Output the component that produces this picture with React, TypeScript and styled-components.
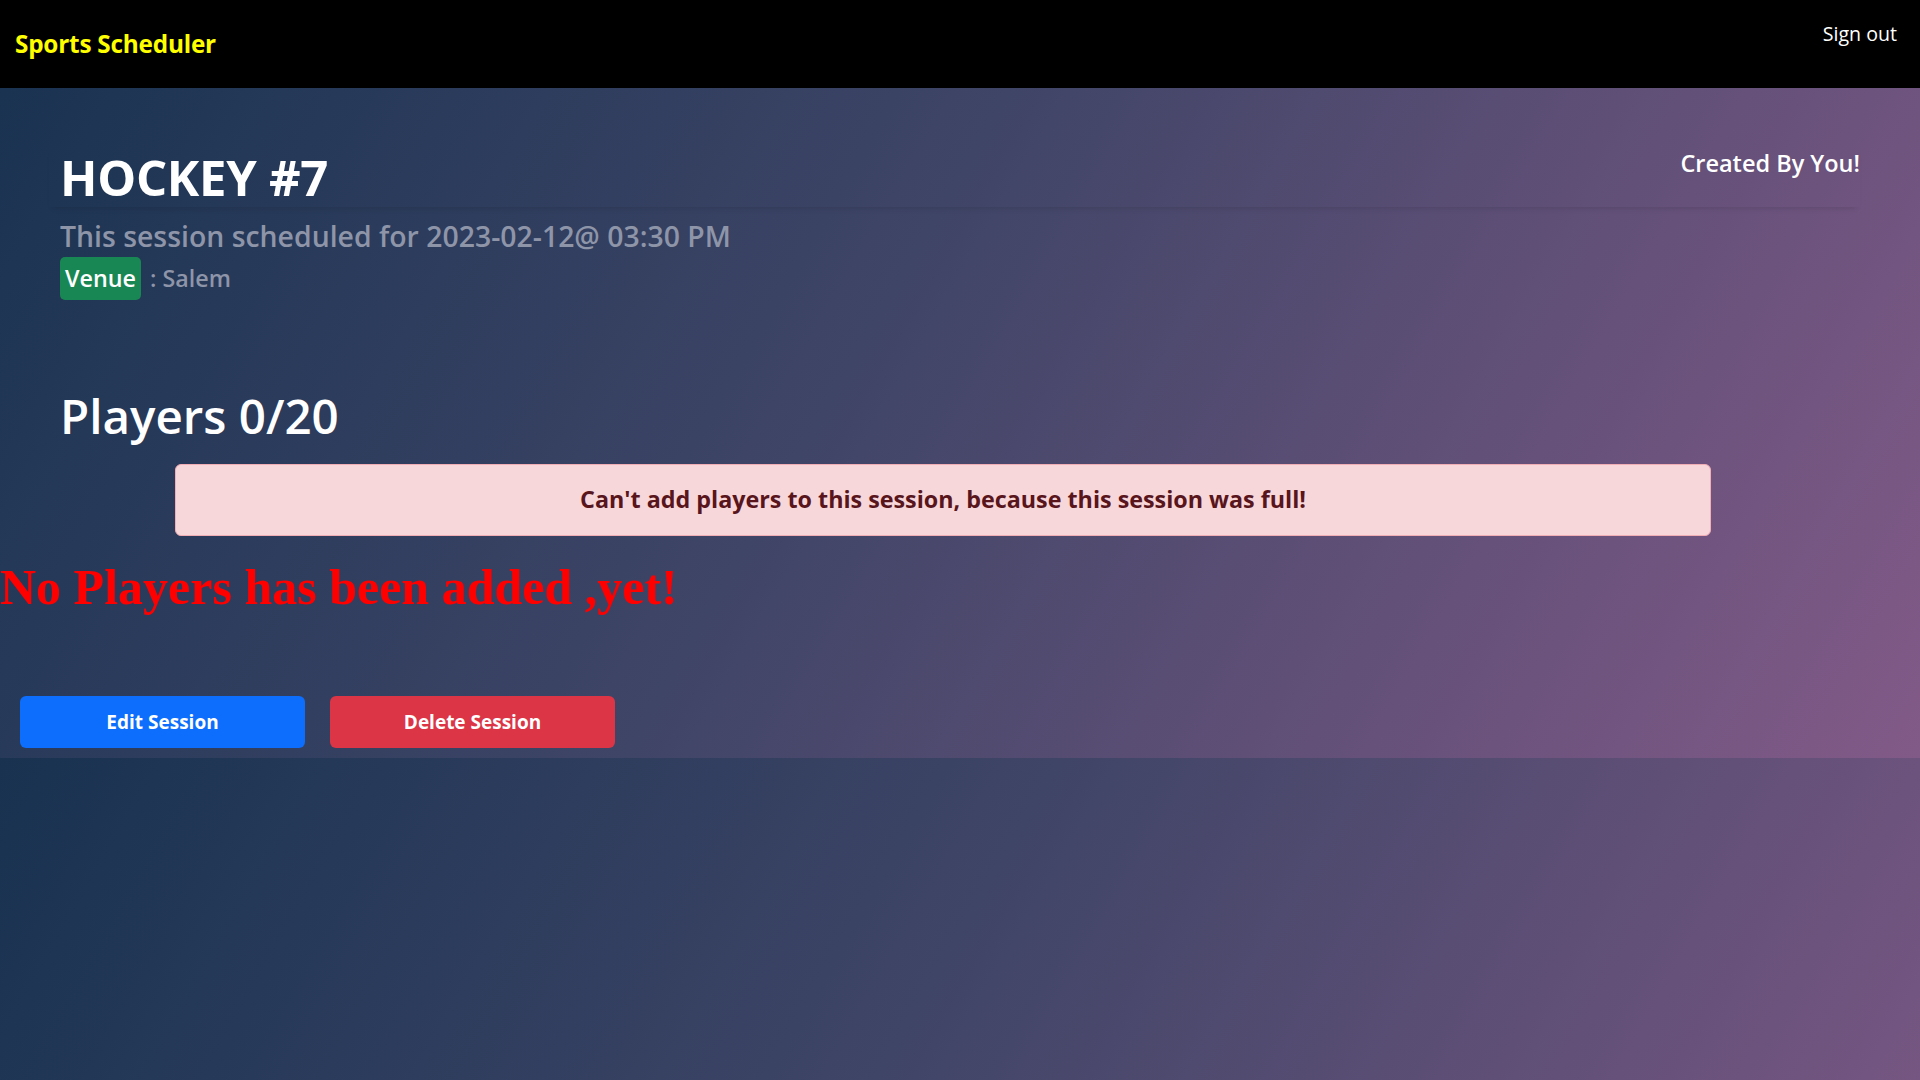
import React from "react";
import styled, { createGlobalStyle } from "styled-components";

const GlobalStyle = createGlobalStyle`
  html, body {
    margin: 0;
    padding: 0;
  }
  body {
    background: linear-gradient(120deg, #183250 0%, #3f4567 45%, #825a88 100%);
    font-family: "Open Sans", "Noto Sans", Arial, sans-serif;
    color: #fff;
  }
`;

const NavBar = styled.nav`
  display: flex;
  justify-content: space-between;
  align-items: flex-start;
  height: 88px;
  background: #000;
  padding: 0 23px 0 15px;
  box-sizing: border-box;
`;

const Brand = styled.a`
  align-self: center;
  color: #ffff00;
  font-weight: 700;
  font-size: 24.3px;
  line-height: 1.4;
  text-decoration: none;
  letter-spacing: -0.2px;
`;

const NavLink = styled.a`
  margin-top: 20px;
  color: #fff;
  font-size: 19.6px;
  line-height: 28px;
  text-decoration: none;
`;

const Section = styled.main`
  display: flex;
  flex-direction: column;
  padding: 57px 0 10px;
`;

const HeaderCard = styled.div`
  display: flex;
  justify-content: space-between;
  align-items: flex-start;
  margin: 0 60px 0 49px;
  padding: 0 0 2px 11px;
  box-shadow: 0 5px 6px -4px rgba(0, 0, 0, 0.12);
`;

const Title = styled.h1`
  margin: 0;
  padding-top: 4px;
  font-size: 49px;
  font-weight: 700;
  line-height: 56px;
  color: #fff;
  letter-spacing: -0.3px;
`;

const Owner = styled.span`
  margin-top: 4px;
  font-size: 23.5px;
  font-weight: 600;
  line-height: 28px;
  color: #fff;
`;

const Subtitle = styled.h3`
  margin: 13px 0 0 60px;
  font-size: 28.4px;
  font-weight: 600;
  line-height: 32px;
  color: #8e95a9;
`;

const VenueRow = styled.h4`
  display: flex;
  align-items: center;
  gap: 9px;
  margin: 5px 0 0 60px;
  font-size: 23.3px;
  font-weight: 600;
  line-height: 29px;
  color: #8e95a9;
`;

const Badge = styled.span`
  background: #198754;
  color: #fff;
  font-weight: 600;
  padding: 7px 5px;
  border-radius: 5px;
`;

const PlayersHeading = styled.h2`
  margin: 87px 0 0 60px;
  font-size: 47.5px;
  font-weight: 600;
  line-height: 58px;
  color: #fff;
`;

const Alert = styled.div`
  margin: 19px 0 0 175px;
  width: 1536px;
  box-sizing: border-box;
  padding: 18px 16px 19px;
  background: #f8d7da;
  border: 1px solid #f1aeb5;
  border-radius: 6px;
  color: #58151c;
  font-size: 23.3px;
  font-weight: 700;
  line-height: 33px;
  text-align: center;
`;

const EmptyNote = styled.h1`
  margin: 23px 0 0;
  font-family: "Liberation Serif", "Times New Roman", serif;
  font-size: 50px;
  font-weight: 700;
  line-height: 57px;
  color: #ff0000;
`;

const ButtonRow = styled.div`
  display: flex;
  gap: 25px;
  margin: 80px 0 0 20px;
`;

const ActionButton = styled.button<{ $variant: "primary" | "danger" }>`
  width: 285px;
  height: 52px;
  border: none;
  border-radius: 6px;
  background: ${(p) => (p.$variant === "primary" ? "#0d6efd" : "#dc3545")};
  color: #fff;
  font-family: "Open Sans", "Noto Sans", Arial, sans-serif;
  font-size: 19px;
  font-weight: 700;
  cursor: pointer;
`;

export default function App() {
  return (
    <>
      <GlobalStyle />
      <NavBar>
        <Brand href="#">Sports Scheduler</Brand>
        <NavLink href="#">Sign out</NavLink>
      </NavBar>
      <Section>
        <HeaderCard>
          <Title>HOCKEY #7</Title>
          <Owner>Created By You!</Owner>
        </HeaderCard>
        <Subtitle>This session scheduled for 2023-02-12@ 03:30 PM</Subtitle>
        <VenueRow>
          <Badge>Venue</Badge>
          <span>: Salem</span>
        </VenueRow>
        <PlayersHeading>Players 0/20</PlayersHeading>
        <Alert>Can't add players to this session, because this session was full!</Alert>
        <EmptyNote>No Players has been added ,yet!</EmptyNote>
        <ButtonRow>
          <ActionButton $variant="primary">Edit Session</ActionButton>
          <ActionButton $variant="danger">Delete Session</ActionButton>
        </ButtonRow>
      </Section>
    </>
  );
}
